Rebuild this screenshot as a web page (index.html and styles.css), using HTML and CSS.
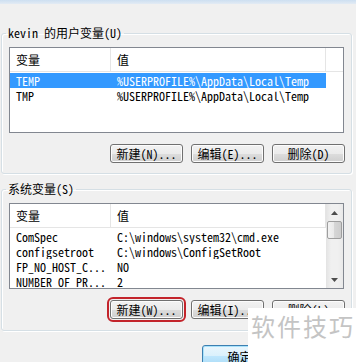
FILE: index.html
```html
<!DOCTYPE html>
<html lang="zh-CN">
<head>
    <meta charset="UTF-8">
    <title>环境变量</title>
    <link rel="stylesheet" href="styles.css">
</head>
<body>

<div class="titlebar"></div>

<fieldset class="group">
    <legend>kevin 的用户变量(U)</legend>
    <div class="list">
        <div class="list-body">
            <div class="row head"><span class="c1">变量</span><span class="c2">值</span></div>
            <div class="row selected"><span class="c1">TEMP</span><span class="c2">%USERPROFILE%\AppData\Local\Temp</span></div>
            <div class="row"><span class="c1">TMP</span><span class="c2">%USERPROFILE%\AppData\Local\Temp</span></div>
        </div>
    </div>
    <div class="buttons">
        <button>新建(N)...</button>
        <button>编辑(E)...</button>
        <button>删除(D)</button>
    </div>
</fieldset>

<fieldset class="group system">
    <legend>系统变量(S)</legend>
    <div class="list">
        <div class="list-body">
            <div class="row head"><span class="c1">变量</span><span class="c2">值</span></div>
            <div class="row"><span class="c1">ComSpec</span><span class="c2">C:\windows\system32\cmd.exe</span></div>
            <div class="row"><span class="c1">configsetroot</span><span class="c2">C:\windows\ConfigSetRoot</span></div>
            <div class="row"><span class="c1">FP_NO_HOST_C...</span><span class="c2">NO</span></div>
            <div class="row"><span class="c1">NUMBER_OF_PR...</span><span class="c2">2</span></div>
        </div>
        <div class="scrollbar">
            <div class="arrow">
                <svg width="7" height="4" viewBox="0 0 7 4"><path d="M0 4 L3.5 0 L7 4 Z" fill="#4d4d4d"/></svg>
            </div>
            <div class="thumb"></div>
            <div class="track"></div>
            <div class="arrow">
                <svg width="7" height="4" viewBox="0 0 7 4"><path d="M0 0 L7 0 L3.5 4 Z" fill="#4d4d4d"/></svg>
            </div>
        </div>
    </div>
    <div class="buttons">
        <button class="marked">新建(W)...</button>
        <button>编辑(I)...</button>
        <button>删除(L)</button>
    </div>
</fieldset>

<div class="footer">
    <button class="default">确定</button>
    <button>取消</button>
</div>

<div class="watermark">软件技巧</div>

</body>
</html>
```

FILE: styles.css
```css
body {
    margin: 0;
    width: 356px;
    height: 362px;
    overflow: hidden;
    position: relative;
    background-color: #f0f0f0;
    font-family: "Noto Sans Mono CJK SC", "Noto Sans CJK SC", "Liberation Mono", monospace;
    font-size: 12px;
    color: #000;
}
.titlebar {
    height: 4px;
    background: linear-gradient(#cddff1, #e3ebf4);
}
.group {
    margin: 22px 4px 0 1px;
    padding: 7px 7px 10px 7px;
    border: 1px solid #d5dfe5;
    border-radius: 3px;
    box-shadow: inset 1px 1px 0 #fff, 1px 1px 0 #fff;
}
.group legend {
    padding: 0 2px;
    margin-left: -3px;
    line-height: 14px;
}
.group.system {
    margin-top: 8px;
    padding-bottom: 11px;
}
.list {
    display: flex;
    height: 84px;
    border: 1px solid #828790;
    background-color: white;
    overflow: hidden;
}
.list-body {
    flex: 1;
}
.row {
    display: grid;
    grid-template-columns: 101px 215px;
    height: 15px;
    line-height: 15px;
    white-space: nowrap;
}
.row span {
    padding-left: 6px;
    overflow: hidden;
}
.row.head {
    height: 23px;
    line-height: 23px;
    border-bottom: 1px solid #e5e5e5;
    margin-bottom: 1px;
}
.row.head span {
    border-right: 1px solid #e5e5e5;
}
.row.selected span {
    background-color: #3399ff;
    color: white;
}
.system .list-body .row.head + .row {
    margin-top: 0;
}
.scrollbar {
    width: 17px;
    display: flex;
    flex-direction: column;
    background: linear-gradient(to right, #e3e3e3, #f0f0f0 30%, #f0f0f0 70%, #e9e9e9);
}
.arrow {
    height: 17px;
    display: flex;
    align-items: center;
    justify-content: center;
}
.thumb {
    height: 16px;
    margin: 0 1px;
    border: 1px solid #9e9e9e;
    border-radius: 2px;
    background: linear-gradient(to right, #f3f3f3, #e8e8e8 50%, #d6d6d6 50%, #cdcdcd);
}
.track {
    flex: 1;
}
.buttons {
    display: flex;
    justify-content: flex-end;
    gap: 8px;
    margin-top: 11px;
    padding-right: 0;
    margin-right: -1px;
}
button {
    width: 73px;
    height: 19px;
    padding: 0;
    font-family: inherit;
    font-size: 12px;
    color: #000;
    border: 1px solid #707070;
    border-radius: 3px;
    background: linear-gradient(#f2f2f2, #ebebeb 50%, #dddddd 50%, #cfcfcf);
    box-shadow: inset 0 0 0 1px #fcfcfc;
}
button.marked {
    outline: 2px solid #c3242b;
    outline-offset: 1px;
}
.footer {
    display: flex;
    gap: 8px;
    margin-top: 14px;
    padding-left: 202px;
}
.footer button {
    width: 75px;
    height: 23px;
    flex-shrink: 0;
}
button.default {
    border-color: #3c7fb1;
    background: linear-gradient(#eaf6fd, #d9f0fc 50%, #bee6fd 50%, #a7d9f5);
    box-shadow: inset 0 0 0 1px #a8e2fb;
}
.watermark {
    position: absolute;
    right: 0;
    bottom: 0;
    width: 108px;
    height: 54px;
    background-color: white;
    color: #c4c4c4;
    font-family: "Noto Sans CJK SC", sans-serif;
    font-size: 24px;
    letter-spacing: 2px;
    line-height: 36px;
    padding-left: 3px;
    box-sizing: border-box;
}
```
